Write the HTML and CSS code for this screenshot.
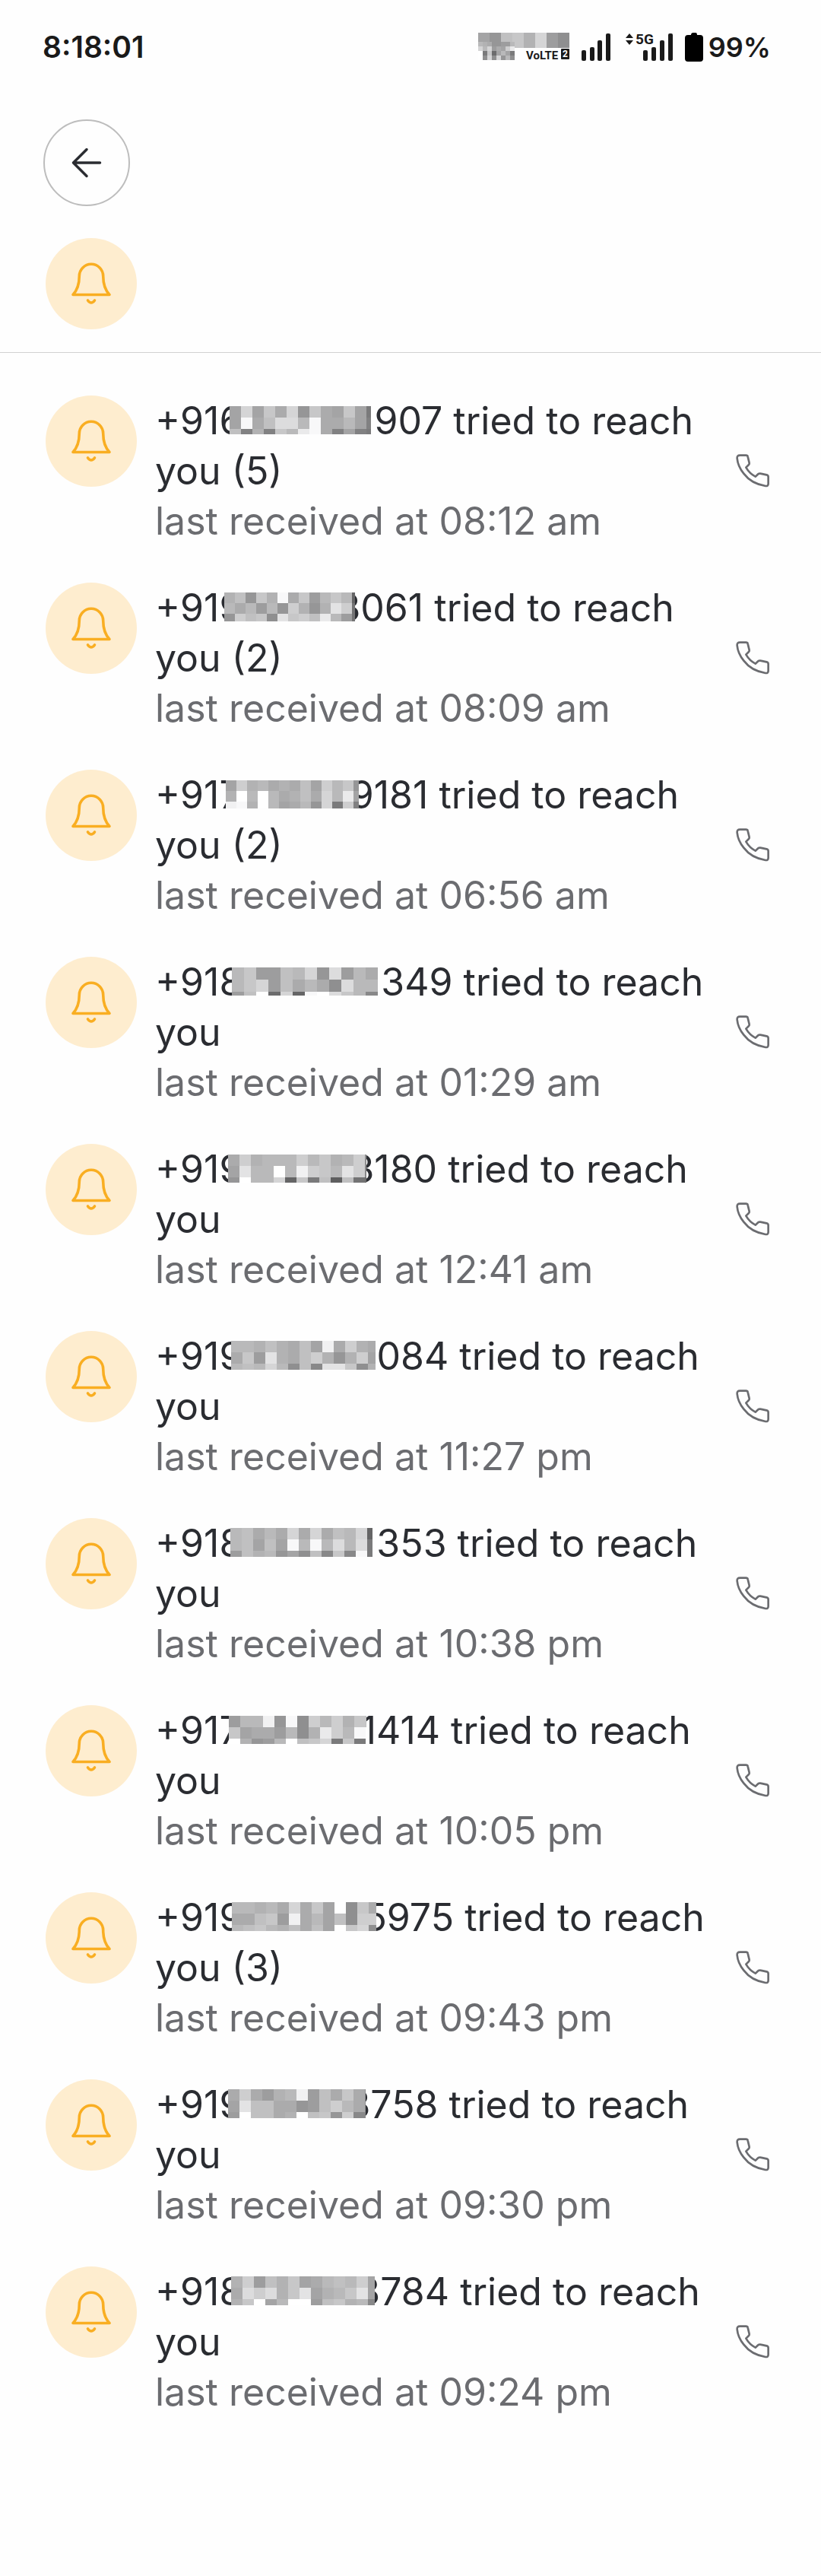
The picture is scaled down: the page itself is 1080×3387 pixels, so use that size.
FILE: index.html
```html
<!DOCTYPE html>
<html lang="en">
<head>
    <meta charset="UTF-8">
    <meta name="viewport" content="width=device-width, initial-scale=1.0">
    <title>Missed calls</title>
    <link rel="stylesheet" href="styles.css">
</head>
<body>
    <!-- Shared icons -->
    <svg class="icon-defs" aria-hidden="true">
        <symbol id="icon-bell" viewBox="0 0 120 120">
            <path d="M36 74.5C42 68 44.3 60 44.3 50A15.7 15.7 0 0 1 75.7 50C75.7 60 78 68 84 74.5Z"/>
            <path d="M55.5 82Q60 88 64.5 82"/>
        </symbol>
        <symbol id="icon-phone" viewBox="18 21 192 192">
            <path d="M70 56H94Q100 56 101 61L107 86Q108 90 105 93L94 104Q108 128 131 140L143 129Q147 127 151 128L175 133Q182 135 182 141V168Q182 178 171 177Q115 168 85 128Q62 100 59 68Q58 56 70 56Z"/>
        </symbol>
    </svg>

    <div class="status-bar">
        <span class="clock">8:18:01</span>
        <div class="status-icons">
            <svg class="carrier" width="120" height="38" viewBox="0 0 120 38">
                <g id="carrier-mask"></g>
                <text class="volte" x="63" y="35">VoLTE</text>
                <rect x="109" y="21" width="11" height="14" rx="1"/>
                <text class="volte-number" x="111" y="32">2</text>
            </svg>
            <svg class="signal" width="38" height="38" viewBox="0 0 38 38">
                <rect x="0" y="23" width="6" height="14" rx="2"/>
                <rect x="11" y="19" width="6" height="18" rx="2"/>
                <rect x="21" y="10" width="6" height="27" rx="2"/>
                <rect x="32" y="1" width="6" height="36" rx="2"/>
            </svg>
            <svg class="signal signal-5g" width="62" height="38" viewBox="0 0 62 38">
                <path d="M0 7L5 1L10 7Z M0 10L5 16L10 10Z"/>
                <text class="network" x="13" y="15">5G</text>
                <rect x="23" y="23" width="6" height="14" rx="2"/>
                <rect x="34" y="19" width="6" height="18" rx="2"/>
                <rect x="45" y="10" width="6" height="27" rx="2"/>
                <rect x="56" y="1" width="6" height="36" rx="2"/>
            </svg>
            <svg class="battery" width="24" height="38" viewBox="0 0 24 38">
                <path d="M4 3H8Q8 0 11 0H14Q16 0 16 3H20Q24 3 24 7V34Q24 38 20 38H4Q0 38 0 34V7Q0 3 4 3Z"/>
            </svg>
            <span class="battery-level">99%</span>
        </div>
    </div>

    <header class="header">
        <button class="back-button" type="button" aria-label="Back">
            <svg viewBox="0 0 24 24"><path d="M19 12H5M12 19L5 12L12 5"/></svg>
        </button>
        <div class="bell"><svg><use href="#icon-bell"/></svg></div>
    </header>

    <main>
        <ul class="call-list" id="call-list"></ul>
    </main>

    <script src="script.js"></script>
</body>
</html>
```
FILE: styles.css
```css
* {
    box-sizing: border-box;
}

body {
    margin: 0;
    background-color: #fefefe;
    color: #2a2c31;
    font-family: Inter, 'Liberation Sans', sans-serif;
    font-size: 50px;
    line-height: 66px;
}

svg {
    display: block;
}

.icon-defs {
    display: none;
}

/* Status bar */
.status-bar {
    display: flex;
    justify-content: space-between;
    align-items: center;
    padding: 42px 66px 0 56px;
    color: #1a1a1a;
    line-height: 40px;
    font-weight: 600;
}

.clock {
    font-size: 39px;
}

.status-icons {
    display: flex;
    align-items: center;
    fill: #1a1a1a;
}

.status-icons svg {
    overflow: visible;
}

.signal {
    margin-left: 16px;
}

.signal-5g {
    margin-left: 20px;
}

.battery {
    margin: 0 7px 0 16px;
    fill: #000;
}

.battery-level {
    font-size: 36px;
}

.volte {
    font: bold 15px Roboto, sans-serif;
}

.volte-number {
    font: bold 12px Roboto, sans-serif;
    fill: #fff;
}

.network {
    font: bold 19px Roboto, sans-serif;
}

/* Header */
.header {
    display: flex;
    flex-direction: column;
    align-items: flex-start;
    gap: 42px;
    padding: 75px 57px 30px;
    border-bottom: 1px solid #d2d2d2;
}

.back-button {
    display: flex;
    justify-content: center;
    align-items: center;
    width: 114px;
    height: 114px;
    padding: 0;
    background: none;
    border: 2px solid #bdbdbd;
    border-radius: 50%;
    cursor: pointer;
}

.back-button svg {
    width: 60px;
    height: 60px;
    fill: none;
    stroke: #2a2c31;
    stroke-width: 1.4;
    stroke-linecap: round;
    stroke-linejoin: round;
}

.bell {
    flex: none;
    width: 120px;
    height: 120px;
    background-color: #feedcf;
    border-radius: 50%;
}

.header .bell {
    margin-left: 3px;
}

.bell svg {
    width: 100%;
    height: 100%;
    fill: none;
    stroke: #f9ae22;
    stroke-width: 3.6;
    stroke-linecap: round;
    stroke-linejoin: round;
}

/* Calls */
.call-list {
    display: flex;
    flex-direction: column;
    gap: 48px;
    margin: 0;
    padding: 56px 60px 171px;
    list-style: none;
}

.call {
    display: flex;
    align-items: flex-start;
    gap: 24px;
}

.call-text {
    flex: 1;
}

.call-text p {
    margin: 0;
}

.call-text .call-time {
    color: #6b6c70;
}

.mask {
    display: inline-block;
    position: relative;
    vertical-align: baseline;
}

.call-button {
    align-self: center;
    width: 64px;
    height: 64px;
    padding: 0;
    background: none;
    border: none;
    cursor: pointer;
}

.call-button svg {
    width: 100%;
    height: 100%;
    fill: none;
    stroke: #6b6c70;
    stroke-width: 8;
    stroke-linejoin: round;
}
```
FILE: script.js
```js
// Each call: visible start and end of the number, the mask over the middle digits
// (before/after = how far it reaches over its neighbours), text and time.
// Mask shades go from a (dark) to z (white), one string per row of cells.
const calls = [
    { start: '+916', end: '907', count: 5, time: '08:12 am', before: -17, after: 4, cell: 15, width: 186, height: 37,
      shades: ['mtmrntkrnmrmg', 'mynquupynnpmh', 'qhohrpwynhmhg'] },
    { start: '+919', end: '3061', count: 2, time: '08:09 am', before: -24, after: -24, cell: 14, width: 172, height: 38,
      shades: ['oqkroynrlprpd', 'pnplpksokovsf', 'ksqrjvrsqwplf'] },
    { start: '+917', end: '9181', count: 2, time: '06:56 am', before: -20, after: -11, cell: 14, width: 175, height: 37,
      shades: ['msopnonqmsprk', 'ozpzpnoqntpwm', 'xyozpmnpktgsh'] },
    { start: '+918', end: '349', time: '01:29 am', before: -14, after: 4, cell: 16, width: 192, height: 37,
      shades: ['prllqptkulpn', 'prtlqnpnjupp', 'lqzetdyzurpi'] },
    { start: '+919', end: '3180', time: '12:41 am', before: -19, after: -21, cell: 15, width: 182, height: 37,
      shades: ['nsopppspropsj', 'mvppzpxsrpvsi', 'kzpptdrgqcqfe'] },
    { start: '+919', end: '084', time: '11:27 pm', before: -15, after: 1, cell: 15, width: 190, height: 38,
      shades: ['ppoqonqmxnson', 'nrlvonqsokosm', 'pqptpjqivvrjo'] },
    { start: '+918', end: '353', time: '10:38 pm', before: -16, after: 5, cell: 15, width: 187, height: 38,
      shades: ['pqnpntntnqptd', 'pqmqmypypupug', 'lqopkmjqiriyg'] },
    { start: '+917', end: '1414', time: '10:05 pm', before: -16, after: -7, cell: 15, width: 181, height: 37,
      shades: ['lppxkyjspsorq', 'rmnnlpjowspyz', 'zoklpzqrtgrgz'] },
    { start: '+919', end: '5975', count: 3, time: '09:43 pm', before: -14, after: -17, cell: 15, width: 190, height: 38,
      shades: ['ppopntnrmzjrn', 'nnqrlxnpmqjss', 'pqrpoqnqmzrtj'] },
    { start: '+919', end: '3758', time: '09:30 pm', before: -19, after: -25, cell: 15, width: 181, height: 38,
      shades: ['nsnlopxlqnrnj', 'mvqqnnklqspnj', 'lzqqnozqrksii'] },
    { start: '+918', end: '3784', time: '09:24 pm', before: -15, after: -24, cell: 15, width: 189, height: 38,
      shades: ['oslqormnpqpsm', 'nusuorvmoprvm', 'orzmpzzlqropi'] }
];

const carrierUpper = ['mkqrotlj'];
const carrierLower = ['ponkkllp', 'tptlnmsw', 'zgrempmg', 'zjtjtkpj'];

function cells(rows, w, h, top) {
    return rows.map((row, y) => [...row].map((letter, x) => {
        const level = 80 + (letter.charCodeAt(0) - 97) * 7;
        return `<rect x="${x * w}" y="${top + y * h}" width="${w}" height="${h}" fill="rgb(${level},${level},${level + 1})"/>`;
    }).join('')).join('');
}

document.getElementById('carrier-mask').innerHTML =
    cells(carrierUpper, 15, 20, 0) + cells(carrierLower, 6, 6, 12);

document.getElementById('call-list').innerHTML = calls.map(call => `
    <li class="call">
        <div class="bell"><svg><use href="#icon-bell"/></svg></div>
        <div class="call-text">
            <p>${call.start}<svg class="mask" width="${call.width}" height="${call.height}" style="margin-left: ${call.before}px; margin-right: ${call.after}px" shape-rendering="crispEdges">${cells(call.shades, call.cell, call.cell, 0)}</svg>${call.end} tried to reach you${call.count ? ` (${call.count})` : ''}</p>
            <p class="call-time">last received at ${call.time}</p>
        </div>
        <button class="call-button" type="button" aria-label="Call back"><svg><use href="#icon-phone"/></svg></button>
    </li>`).join('');
```
